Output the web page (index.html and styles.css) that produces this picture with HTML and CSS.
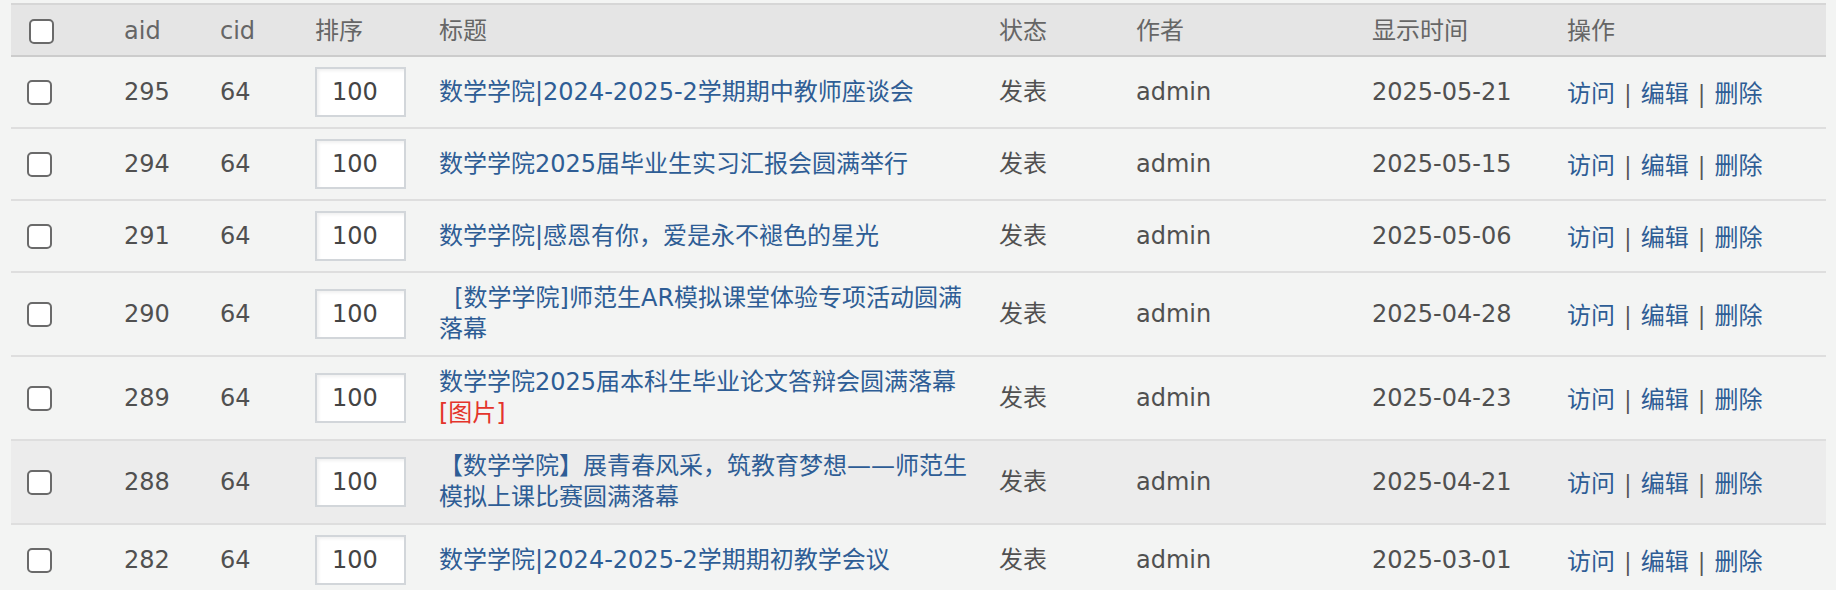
FILE: index.html
```html
<!DOCTYPE html>
<html lang="zh-CN">
<head>
<meta charset="utf-8">
<title>文章列表</title>
<link rel="stylesheet" href="styles.css">
</head>
<body>
<div class="page">
<table class="list">
  <colgroup>
    <col class="c-check"><col class="c-aid"><col class="c-cid"><col class="c-order"><col class="c-title"><col class="c-state"><col class="c-author"><col class="c-time"><col class="c-ops">
  </colgroup>
  <thead>
    <tr>
      <th class="chk"><input type="checkbox" class="cb"></th>
      <th>aid</th>
      <th>cid</th>
      <th>排序</th>
      <th>标题</th>
      <th>状态</th>
      <th>作者</th>
      <th>显示时间</th>
      <th>操作</th>
    </tr>
  </thead>
  <tbody>
    <tr>
      <td class="chk"><input type="checkbox" class="cb"></td>
      <td>295</td><td>64</td>
      <td><input type="text" class="order" value="100"></td>
      <td class="title"><a href="#">数学学院|2024-2025-2学期期中教师座谈会</a></td>
      <td>发表</td><td>admin</td><td>2025-05-21</td>
      <td class="ops"><a href="#">访问</a> | <a href="#">编辑</a> | <a href="#">删除</a></td>
    </tr>
    <tr>
      <td class="chk"><input type="checkbox" class="cb"></td>
      <td>294</td><td>64</td>
      <td><input type="text" class="order" value="100"></td>
      <td class="title"><a href="#">数学学院2025届毕业生实习汇报会圆满举行</a></td>
      <td>发表</td><td>admin</td><td>2025-05-15</td>
      <td class="ops"><a href="#">访问</a> | <a href="#">编辑</a> | <a href="#">删除</a></td>
    </tr>
    <tr>
      <td class="chk"><input type="checkbox" class="cb"></td>
      <td>291</td><td>64</td>
      <td><input type="text" class="order" value="100"></td>
      <td class="title"><a href="#">数学学院|感恩有你，爱是永不褪色的星光</a></td>
      <td>发表</td><td>admin</td><td>2025-05-06</td>
      <td class="ops"><a href="#">访问</a> | <a href="#">编辑</a> | <a href="#">删除</a></td>
    </tr>
    <tr>
      <td class="chk"><input type="checkbox" class="cb"></td>
      <td>290</td><td>64</td>
      <td><input type="text" class="order" value="100"></td>
      <td class="title"><a href="#">&nbsp;&nbsp;[数学学院]师范生AR模拟课堂体验专项活动圆满落幕</a></td>
      <td>发表</td><td>admin</td><td>2025-04-28</td>
      <td class="ops"><a href="#">访问</a> | <a href="#">编辑</a> | <a href="#">删除</a></td>
    </tr>
    <tr>
      <td class="chk"><input type="checkbox" class="cb"></td>
      <td>289</td><td>64</td>
      <td><input type="text" class="order" value="100"></td>
      <td class="title"><a href="#">数学学院2025届本科生毕业论文答辩会圆满落幕</a> <span class="pic">[图片]</span></td>
      <td>发表</td><td>admin</td><td>2025-04-23</td>
      <td class="ops"><a href="#">访问</a> | <a href="#">编辑</a> | <a href="#">删除</a></td>
    </tr>
    <tr class="hover">
      <td class="chk"><input type="checkbox" class="cb"></td>
      <td>288</td><td>64</td>
      <td><input type="text" class="order" value="100"></td>
      <td class="title"><a href="#">【数学学院】展青春风采，筑教育梦想——师范生模拟上课比赛圆满落幕</a></td>
      <td>发表</td><td>admin</td><td>2025-04-21</td>
      <td class="ops"><a href="#">访问</a> | <a href="#">编辑</a> | <a href="#">删除</a></td>
    </tr>
    <tr>
      <td class="chk"><input type="checkbox" class="cb"></td>
      <td>282</td><td>64</td>
      <td><input type="text" class="order" value="100"></td>
      <td class="title"><a href="#">数学学院|2024-2025-2学期期初教学会议</a></td>
      <td>发表</td><td>admin</td><td>2025-03-01</td>
      <td class="ops"><a href="#">访问</a> | <a href="#">编辑</a> | <a href="#">删除</a></td>
    </tr>
  </tbody>
</table>
</div>
</body>
</html>
```

FILE: styles.css
```css
html, body {
  margin: 0;
  padding: 0;
  background: #f3f4f3;
}
.page {
  padding: 3px 10px 0 11px;
}
.list {
  width: 1815px;
  border-collapse: collapse;
  table-layout: fixed;
  font-family: "DejaVu Sans", "Noto Sans CJK SC", sans-serif;
  font-size: 24px;
  line-height: 31px;
  color: #505050;
}
.c-check { width: 113px; }
.c-aid { width: 96px; }
.c-cid { width: 95px; }
.c-order { width: 124px; }
.c-title { width: 560px; }
.c-state { width: 137px; }
.c-author { width: 236px; }
.c-time { width: 195px; }
.c-ops { width: 259px; }

.list thead tr {
  background: #e5e5e5;
  border-top: 2px solid #d6d6d6;
  border-bottom: 2px solid #cccccc;
}
.list th {
  font-weight: normal;
  text-align: left;
  color: #666666;
  padding: 11px 0 9px;
  line-height: 30px;
}
.list td {
  padding: 10px 0;
  vertical-align: middle;
}
.list tbody tr {
  border-bottom: 2px solid #dedede;
}
.list tbody tr.hover {
  background: #ececec;
}
.list th.chk { padding-left: 18px; }
.list td.chk { padding-left: 16px; }
.cb {
  -webkit-appearance: none;
  appearance: none;
  display: block;
  margin: 0;
  width: 25px;
  height: 25px;
  border: 2px solid #6a6a6a;
  border-radius: 5px;
  background: #ffffff;
  box-sizing: border-box;
}
.order {
  display: block;
  box-sizing: border-box;
  width: 91px;
  height: 50px;
  margin: 0;
  padding: 0 0 0 15px;
  border: 2px solid #d2d6da;
  background: #ffffff;
  box-shadow: inset 2px 2px 3px rgba(0, 0, 0, 0.06);
  font-family: "DejaVu Sans", "Noto Sans CJK SC", sans-serif;
  font-size: 24px;
  color: #444444;
  outline: none;
}
.list td.title {
  padding-right: 28px;
}
.list a {
  color: #2e5d95;
  text-decoration: none;
}
.pic {
  color: #e4342b;
}
.ops {
  color: #555555;
  font-family: "Noto Sans", "Noto Sans CJK SC", sans-serif;
}
```
